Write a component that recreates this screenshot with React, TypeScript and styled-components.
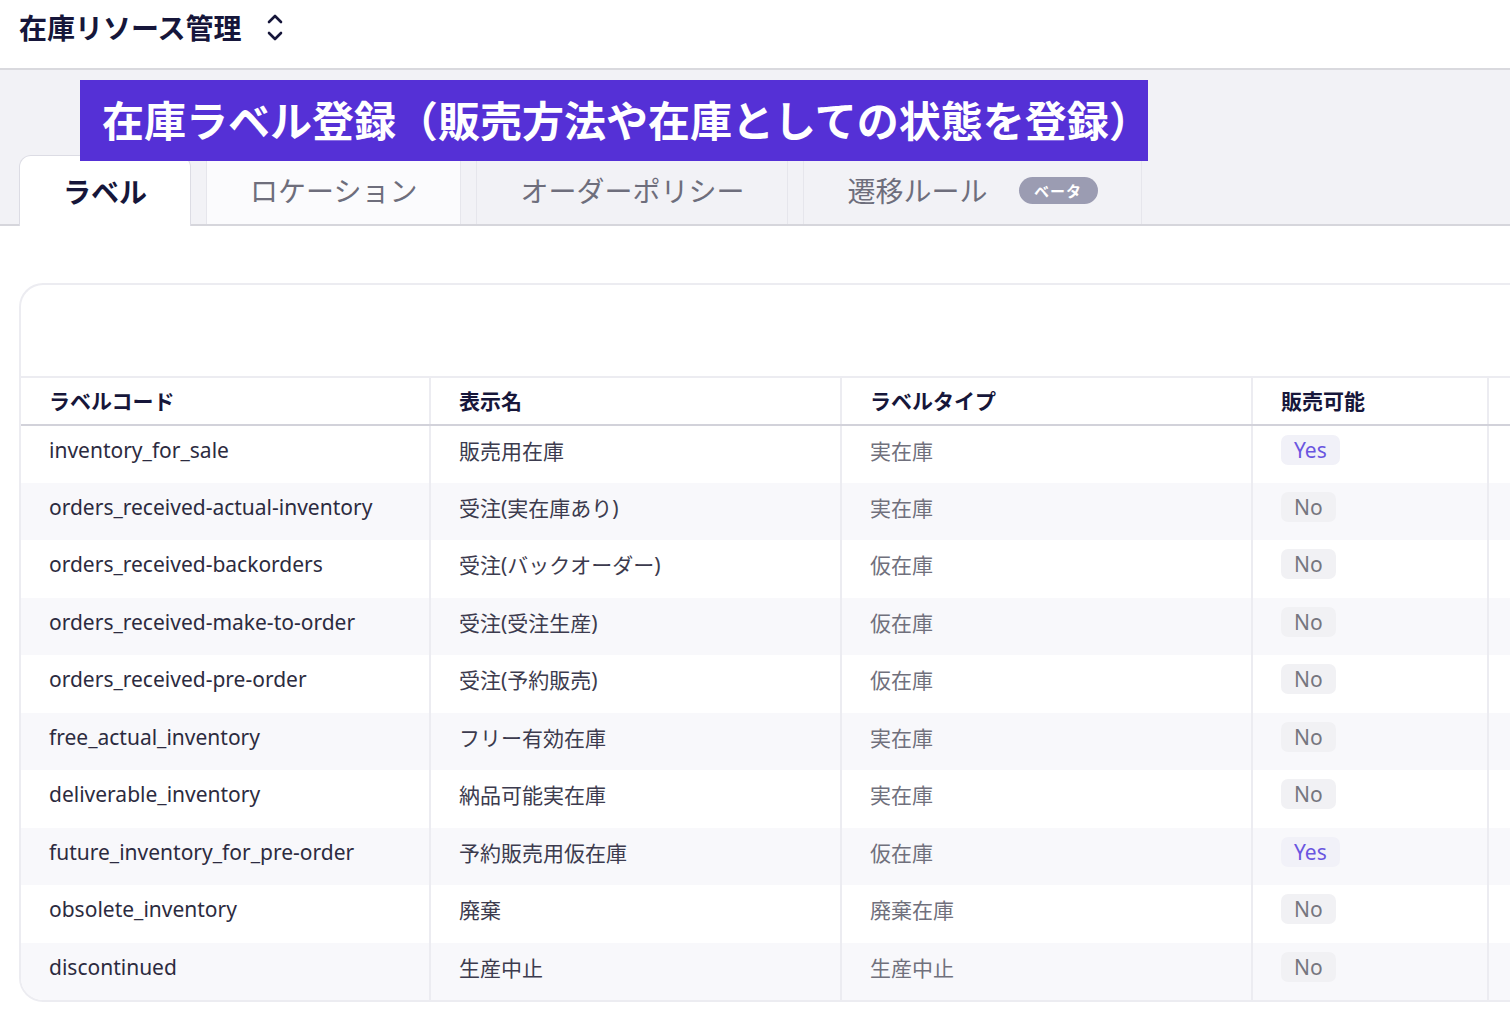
import React from 'react';
import styled, { createGlobalStyle } from 'styled-components';

const GlobalStyle = createGlobalStyle`
    html, body {
        margin: 0;
        padding: 0;
        background: #ffffff;
        overflow: hidden;
    }
    body {
        font-family: "Noto Sans", "Noto Sans CJK JP", sans-serif;
        color: #1c1b33;
    }
`;

const Page = styled.div`
    width: 1510px;
    height: 1036px;
    position: relative;
    overflow: hidden;
`;

const Header = styled.header`
    height: 70px;
    display: flex;
    align-items: flex-start;
    gap: 22px;
    padding: 8px 0 0 19px;
    box-sizing: border-box;
    border-bottom: 2px solid #d9d9de;
`;

const Title = styled.h1`
    margin: 0;
    font-size: 28px;
    font-weight: 700;
    line-height: 38px;
    color: #16163a;
    font-family: "Noto Sans CJK JP", sans-serif;
`;

const IconWrap = styled.span`
    display: flex;
    align-items: center;
    height: 38px;
`;

const TabArea = styled.div`
    background: #f2f2f6;
    padding-top: 85px;
    padding-left: 19px;
    border-bottom: 2px solid #d6d6dc;
    display: flex;
    gap: 15px;
    height: 156px;
    box-sizing: border-box;
`;

const Tab = styled.div<{ $active?: boolean; $light?: boolean }>`
    padding: 0 43px;
    display: flex;
    align-items: center;
    gap: 31px;
    box-sizing: border-box;
    font-family: "Noto Sans CJK JP", sans-serif;
    font-size: 28px;
    font-weight: ${p => (p.$active ? 700 : 400)};
    color: ${p => (p.$active ? '#16163a' : '#6e6e7c')};
    background: ${p => (p.$active ? '#ffffff' : p.$light ? '#fbfbfd' : '#f2f2f6')};
    border: 1px solid ${p => (p.$active ? '#dcdce4' : '#e6e6ec')};
    border-bottom: none;
    border-radius: ${p => (p.$active ? '12px 12px 0 0' : '0')};
    margin-bottom: ${p => (p.$active ? '-2px' : '0')};
    height: ${p => (p.$active ? '71px' : '69px')};
`;

const Beta = styled.span`
    display: inline-flex;
    align-items: center;
    justify-content: center;
    width: 79px;
    height: 27px;
    border-radius: 14px;
    background: #9b9cb2;
    color: #ffffff;
    font-size: 15px;
    font-weight: 700;
    letter-spacing: 1px;
`;

const Banner = styled.div`
    position: absolute;
    left: 80px;
    top: 80px;
    height: 81px;
    width: 1068px;
    box-sizing: border-box;
    padding: 0 0 4px 22px;
    background: #5530d6;
    color: #ffffff;
    display: flex;
    align-items: center;
    font-family: "Noto Sans CJK JP", sans-serif;
    font-size: 42px;
    font-weight: 700;
    white-space: nowrap;
`;

const Content = styled.div`
    padding: 57px 0 0 19px;
`;

const Card = styled.div`
    width: 1700px;
    border: 2px solid #ececf1;
    border-right: none;
    border-radius: 24px 0 0 24px;
    background: #ffffff;
    overflow: hidden;
`;

const CardTop = styled.div`
    height: 91px;
    border-bottom: 2px solid #ececf1;
`;

const Table = styled.table`
    border-collapse: collapse;
    table-layout: fixed;
    width: 1698px;
`;

const Th = styled.th<{ $w: number }>`
    box-sizing: border-box;
    width: ${p => p.$w}px;
    height: 47px;
    padding: 0 0 2px 28px;
    text-align: left;
    font-family: "Noto Sans CJK JP", sans-serif;
    font-size: 21px;
    font-weight: 700;
    color: #16163a;
    border-right: 2px solid #ececf1;
    border-bottom: 2px solid #d2d2da;
`;

const Tr = styled.tr<{ $striped: boolean }>`
    height: 57.5px;
    background: ${p => (p.$striped ? '#f8f8fb' : '#ffffff')};
`;

const Td = styled.td<{ $tone?: 'code' | 'name' | 'type' }>`
    box-sizing: border-box;
    padding: 0 0 9px 28px;
    font-family: "Noto Sans", "Noto Sans CJK JP", sans-serif;
    font-size: 21px;
    color: ${p => (p.$tone === 'code' ? '#2c2b40' : p.$tone === 'type' ? '#70707c' : '#3c3b4e')};
    border-right: 2px solid #ececf1;
    white-space: nowrap;
    vertical-align: middle;
`;

const Pill = styled.span<{ $yes: boolean }>`
    display: inline-block;
    padding: 0 13px;
    height: 30px;
    line-height: 30px;
    border-radius: 7px;
    background: ${p => (p.$yes ? '#f1f1f8' : '#f1f1f4')};
    color: ${p => (p.$yes ? '#6a56e0' : '#76767f')};
    font-family: "Noto Sans", sans-serif;
    font-size: 21px;
`;

const ChevronsUpDown = () => (
    <svg width="22" height="30" viewBox="0 0 22 30" fill="none" stroke="#16163a" strokeWidth="2.6" strokeLinecap="round" strokeLinejoin="round">
        <path d="M5 10 L11 4 L17 10" />
        <path d="M5 21 L11 27 L17 21" />
    </svg>
);

const rows = [
    { code: 'inventory_for_sale', name: '販売用在庫', type: '実在庫', sale: true },
    { code: 'orders_received-actual-inventory', name: '受注(実在庫あり)', type: '実在庫', sale: false },
    { code: 'orders_received-backorders', name: '受注(バックオーダー)', type: '仮在庫', sale: false },
    { code: 'orders_received-make-to-order', name: '受注(受注生産)', type: '仮在庫', sale: false },
    { code: 'orders_received-pre-order', name: '受注(予約販売)', type: '仮在庫', sale: false },
    { code: 'free_actual_inventory', name: 'フリー有効在庫', type: '実在庫', sale: false },
    { code: 'deliverable_inventory', name: '納品可能実在庫', type: '実在庫', sale: false },
    { code: 'future_inventory_for_pre-order', name: '予約販売用仮在庫', type: '仮在庫', sale: true },
    { code: 'obsolete_inventory', name: '廃棄', type: '廃棄在庫', sale: false },
    { code: 'discontinued', name: '生産中止', type: '生産中止', sale: false },
];

const App = () => {
    return (
        <Page>
            <GlobalStyle />
            <Header>
                <Title>在庫リソース管理</Title>
                <IconWrap><ChevronsUpDown /></IconWrap>
            </Header>
            <TabArea>
                <Tab $active>ラベル</Tab>
                <Tab $light>ロケーション</Tab>
                <Tab>オーダーポリシー</Tab>
                <Tab>遷移ルール<Beta>ベータ</Beta></Tab>
            </TabArea>
            <Banner>在庫ラベル登録（販売方法や在庫としての状態を登録）</Banner>
            <Content>
                <Card>
                    <CardTop />
                    <Table>
                        <thead>
                            <tr>
                                <Th $w={409}>ラベルコード</Th>
                                <Th $w={411}>表示名</Th>
                                <Th $w={411}>ラベルタイプ</Th>
                                <Th $w={236}>販売可能</Th>
                                <Th $w={231}></Th>
                            </tr>
                        </thead>
                        <tbody>
                            {rows.map((r, i) => (
                                <Tr key={r.code} $striped={i % 2 === 1}>
                                    <Td $tone="code">{r.code}</Td>
                                    <Td $tone="name">{r.name}</Td>
                                    <Td $tone="type">{r.type}</Td>
                                    <Td><Pill $yes={r.sale}>{r.sale ? 'Yes' : 'No'}</Pill></Td>
                                    <Td></Td>
                                </Tr>
                            ))}
                        </tbody>
                    </Table>
                </Card>
            </Content>
        </Page>
    );
};

export default App;
